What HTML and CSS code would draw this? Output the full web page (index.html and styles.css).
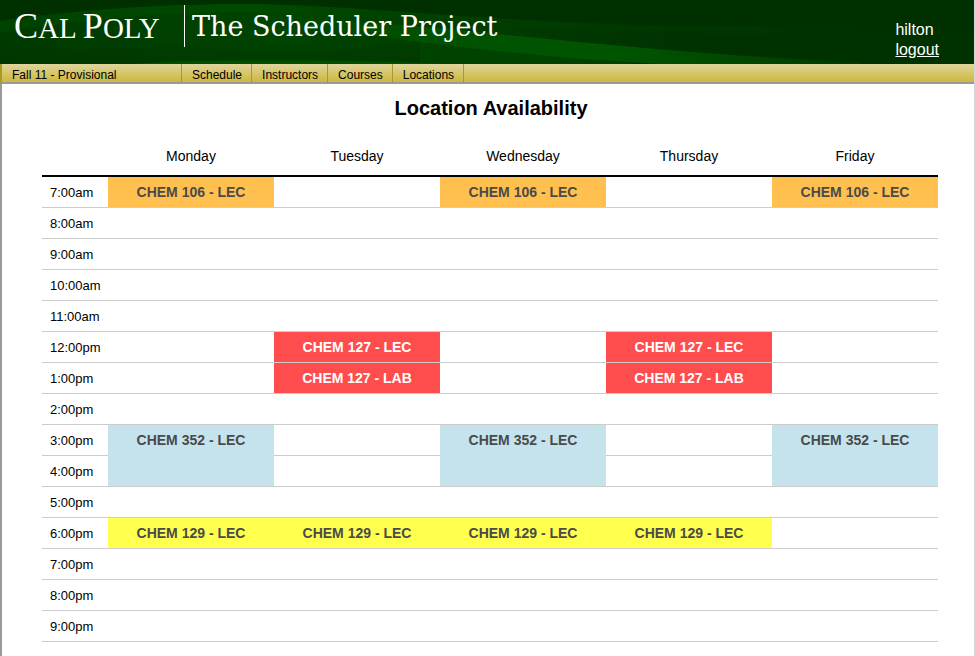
FILE: index.html
```html
<!DOCTYPE html>
<html lang="en">
<head>
<meta charset="utf-8">
<title>The Scheduler Project</title>
<link rel="stylesheet" href="styles.css">
</head>
<body>
<div class="page">
<header class="banner">
  <svg class="waves" viewBox="0 0 974 64" preserveAspectRatio="none" aria-hidden="true">
    <defs>
      <linearGradient id="top" x1="0" x2="1" y1="0" y2="0"><stop offset="0" stop-color="#004200"/><stop offset=".25" stop-color="#004a00"/><stop offset=".45" stop-color="#004000"/><stop offset=".7" stop-color="#003600"/><stop offset=".9" stop-color="#003000"/></linearGradient>
      <linearGradient id="mid" x1="0" x2="1" y1="0" y2="0"><stop offset="0" stop-color="#003a00"/><stop offset=".3" stop-color="#004500"/><stop offset=".5" stop-color="#003c00"/><stop offset=".7" stop-color="#003200"/><stop offset="1" stop-color="#003200"/></linearGradient>
      <linearGradient id="low" x1="0" x2="1" y1="0" y2="0"><stop offset="0" stop-color="#005200" stop-opacity="0"/><stop offset=".3" stop-color="#005200"/><stop offset=".6" stop-color="#005500"/><stop offset="1" stop-color="#003a00"/></linearGradient>
      <linearGradient id="shade" x1="0" x2="0" y1="0" y2="1"><stop offset=".45" stop-color="#003600" stop-opacity="0"/><stop offset="1" stop-color="#003600" stop-opacity=".8"/></linearGradient>
    </defs>
    <path fill="url(#top)" d="M0 21C80 10 150 4 250 4C360 5 500 24 700 26C780 27 860 24 974 8V64H0Z"/>
    <path fill="url(#mid)" d="M0 33C80 20 150 12 250 12C380 14 500 31 750 34C850 36 974 30 974 30V64H0Z"/>
    <path fill="url(#shade)" d="M0 20H420V64H0Z"/>
    <path fill="#004300" d="M420 40C480 48 560 56 640 64H420Z"/>
    <path fill="url(#low)" d="M250 16C380 20 480 33 600 44C700 53 760 58 860 62V64H660C580 60 500 52 420 42C360 34 310 26 250 16Z"/>
    <path fill="#005000" d="M130 64C200 59 330 59 450 64Z"/>
  </svg>
  <div class="logo"><span class="cap">C</span>AL <span class="cap">P</span>OLY</div>
  <div class="site-title">The Scheduler Project</div>
  <div class="user"><span class="user-name">hilton</span><a href="#logout">logout</a></div>
</header>
<nav class="menu">
  <a class="term" href="#term">Fall 11 - Provisional</a>
  <a href="#schedule">Schedule</a>
  <a href="#instructors">Instructors</a>
  <a href="#courses">Courses</a>
  <a href="#locations">Locations</a>
</nav>
<main class="content">
  <h1>Location Availability</h1>
  <table class="week">
    <thead><tr><th class="time"></th><th scope="col">Monday</th><th scope="col">Tuesday</th><th scope="col">Wednesday</th><th scope="col">Thursday</th><th scope="col">Friday</th></tr></thead>
    <tbody>
      <tr><th scope="row">7:00am</th><td class="orange">CHEM 106 - LEC</td><td></td><td class="orange">CHEM 106 - LEC</td><td></td><td class="orange">CHEM 106 - LEC</td></tr>
      <tr><th scope="row">8:00am</th><td></td><td></td><td></td><td></td><td></td></tr>
      <tr><th scope="row">9:00am</th><td></td><td></td><td></td><td></td><td></td></tr>
      <tr><th scope="row">10:00am</th><td></td><td></td><td></td><td></td><td></td></tr>
      <tr><th scope="row">11:00am</th><td></td><td></td><td></td><td></td><td></td></tr>
      <tr><th scope="row">12:00pm</th><td></td><td class="red">CHEM 127 - LEC</td><td></td><td class="red">CHEM 127 - LEC</td><td></td></tr>
      <tr><th scope="row">1:00pm</th><td></td><td class="red">CHEM 127 - LAB</td><td></td><td class="red">CHEM 127 - LAB</td><td></td></tr>
      <tr><th scope="row">2:00pm</th><td></td><td></td><td></td><td></td><td></td></tr>
      <tr><th scope="row">3:00pm</th><td class="blue" rowspan="2">CHEM 352 - LEC</td><td></td><td class="blue" rowspan="2">CHEM 352 - LEC</td><td></td><td class="blue" rowspan="2">CHEM 352 - LEC</td></tr>
      <tr><th scope="row">4:00pm</th><td></td><td></td></tr>
      <tr><th scope="row">5:00pm</th><td></td><td></td><td></td><td></td><td></td></tr>
      <tr><th scope="row">6:00pm</th><td class="yellow">CHEM 129 - LEC</td><td class="yellow">CHEM 129 - LEC</td><td class="yellow">CHEM 129 - LEC</td><td class="yellow">CHEM 129 - LEC</td><td></td></tr>
      <tr><th scope="row">7:00pm</th><td></td><td></td><td></td><td></td><td></td></tr>
      <tr><th scope="row">8:00pm</th><td></td><td></td><td></td><td></td><td></td></tr>
      <tr><th scope="row">9:00pm</th><td></td><td></td><td></td><td></td><td></td></tr>
    </tbody>
  </table>
</main>
</div>
</body>
</html>
```
FILE: styles.css
```css
* { box-sizing: border-box; }
body {
  margin: 0;
  background: #fff;
  color: #000;
  font-family: "Liberation Sans", Arial, sans-serif;
}
.page { min-height: 100vh; border-right: 1px solid #d8d8d8; }
.banner {
  position: relative;
  display: flex;
  height: 64px;
  padding: 5px 35px 0 14px;
  background: #003000;
  color: #fff;
  overflow: hidden;
}
.waves { position: absolute; inset: 0; width: 100%; height: 100%; }
.logo, .site-title, .user { position: relative; }
.logo {
  width: 171px;
  height: 42px;
  border-right: 1px solid #fff;
  font: 29px/42px "Liberation Serif", "Times New Roman", serif;
  white-space: nowrap;
}
.cap { font-size: 36px; }
.site-title {
  padding-left: 7px;
  font: 27px/44px "DejaVu Serif", serif;
  white-space: nowrap;
}
.user {
  display: flex;
  flex-direction: column;
  margin-left: auto;
  padding-top: 15px;
  font-size: 16px;
  line-height: 20px;
}
.user a { color: #fff; }
.menu {
  display: flex;
  height: 20px;
  border-bottom: 2px solid #999;
  border-left: 2px solid #a89a28;
  background: linear-gradient(#dfd59c, #cdb83c);
}
.menu a {
  padding: 0 9px 0 10px;
  border-right: 1px solid #a89a28;
  color: #000;
  font-size: 12px;
  line-height: 22px;
  text-decoration: none;
}
.menu .term { width: 180px; }
.content {
  min-height: calc(100vh - 84px);
  padding: 12px 36px 14px 40px;
  border-left: 2px solid #999;
}
h1 { margin: 0; padding-left: 2px; font-size: 20px; line-height: 24px; text-align: center; }
.week { width: 100%; margin-top: 17px; border-collapse: separate; border-spacing: 0; table-layout: fixed; }
.week th { font-weight: normal; }
.week .time { width: 66px; }
.week thead th { height: 40px; padding: 0; border-bottom: 2px solid #000; font-size: 14px; }
.week tbody th { padding: 2px 0 0 8px; font-size: 13px; line-height: 28px; text-align: left; }
.week tbody th, .week td { height: 31px; border-bottom: 1px solid #ccc; }
.week td { padding: 0; color: #4a4a4a; font-size: 14px; font-weight: bold; line-height: 30px; text-align: center; vertical-align: top; }
.week .orange { background: #ffc04f; }
.week .red { background: #ff4d4d; color: #fff; }
.week .blue { background: #c5e3ec; }
.week .yellow { background: #ffff4d; }
```
